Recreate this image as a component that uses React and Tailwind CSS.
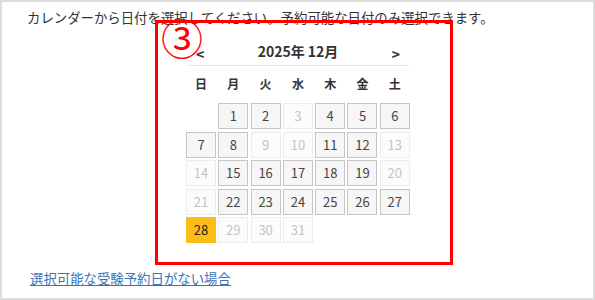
const days = [
  { d: null }, { d: 1, on: true }, { d: 2, on: true }, { d: 3 }, { d: 4, on: true }, { d: 5, on: true }, { d: 6, on: true },
  { d: 7, on: true }, { d: 8, on: true }, { d: 9 }, { d: 10 }, { d: 11, on: true }, { d: 12, on: true }, { d: 13 },
  { d: 14 }, { d: 15, on: true }, { d: 16, on: true }, { d: 17, on: true }, { d: 18, on: true }, { d: 19, on: true }, { d: 20 },
  { d: 21 }, { d: 22, on: true }, { d: 23, on: true }, { d: 24, on: true }, { d: 25, on: true }, { d: 26, on: true }, { d: 27, on: true },
  { d: 28, sel: true }, { d: 29 }, { d: 30 }, { d: 31 },
]

const weekdays = ['日', '月', '火', '水', '木', '金', '土']

function DayCell({ day }) {
  if (!day.d) return <div />
  if (day.sel) {
    return (
      <div className="flex h-[26px] items-center justify-center border border-[#fbbe16] bg-[#fbbe16] text-[13px] text-[#222]">
        {day.d}
      </div>
    )
  }
  if (day.on) {
    return (
      <div className="flex h-[26px] items-center justify-center border border-[#c5c5c5] bg-[#f6f6f6] text-[13px] text-[#454545]">
        {day.d}
      </div>
    )
  }
  return (
    <div className="flex h-[26px] items-center justify-center border border-[#ececec] bg-[#fcfcfc] text-[13px] text-[#c4c4c4]">
      {day.d}
    </div>
  )
}

export default function App() {
  return (
    <div
      className="h-[300px] w-[595px] border-2 border-[#dcdcdc] bg-white px-[25px] text-[#333]"
      style={{ fontFamily: '"Noto Sans CJK JP", "Noto Sans", sans-serif' }}
    >
      <p className="pt-[6px] text-[13.4px] leading-[18px]">
        カレンダーから日付を選択してください。予約可能な日付のみ選択できます。
      </p>

      <div className="relative ml-[128px] mt-[-6px] h-[245px] w-[298px] border-[3px] border-[#ff0000]">
        {/* annotation marker */}
        <span className="absolute left-[3px] top-[-7px] text-[42px] leading-none text-[#ff0000]">③</span>

        <div className="ml-[28px] w-[224px] pt-[15px]">
          <div className="flex h-[28px] items-center justify-between rounded-b-[4px] border-b border-[#e6e6e6] px-[10px] font-bold">
            <span className="mt-[6px] text-[14px]">&lt;</span>
            <span className="text-[14px]">2025年 12月</span>
            <span className="mt-[6px] text-[14px]">&gt;</span>
          </div>

          <div className="mt-[4px] grid grid-cols-[repeat(7,30px)] gap-x-[2.3px]">
            {weekdays.map((w) => (
              <div key={w} className="flex h-[28px] items-center justify-center text-[12px] font-bold">
                {w}
              </div>
            ))}
          </div>

          <div className="mt-[5px] grid grid-cols-[repeat(7,30px)] gap-x-[2.3px] gap-y-[2.5px]">
            {days.map((day, i) => (
              <DayCell key={i} day={day} />
            ))}
          </div>
        </div>
      </div>

      <a href="#" className="ml-[3px] mt-[4px] block text-[13.4px] leading-[18px] text-[#3b73b9] underline">
        選択可能な受験予約日がない場合
      </a>
    </div>
  )
}
